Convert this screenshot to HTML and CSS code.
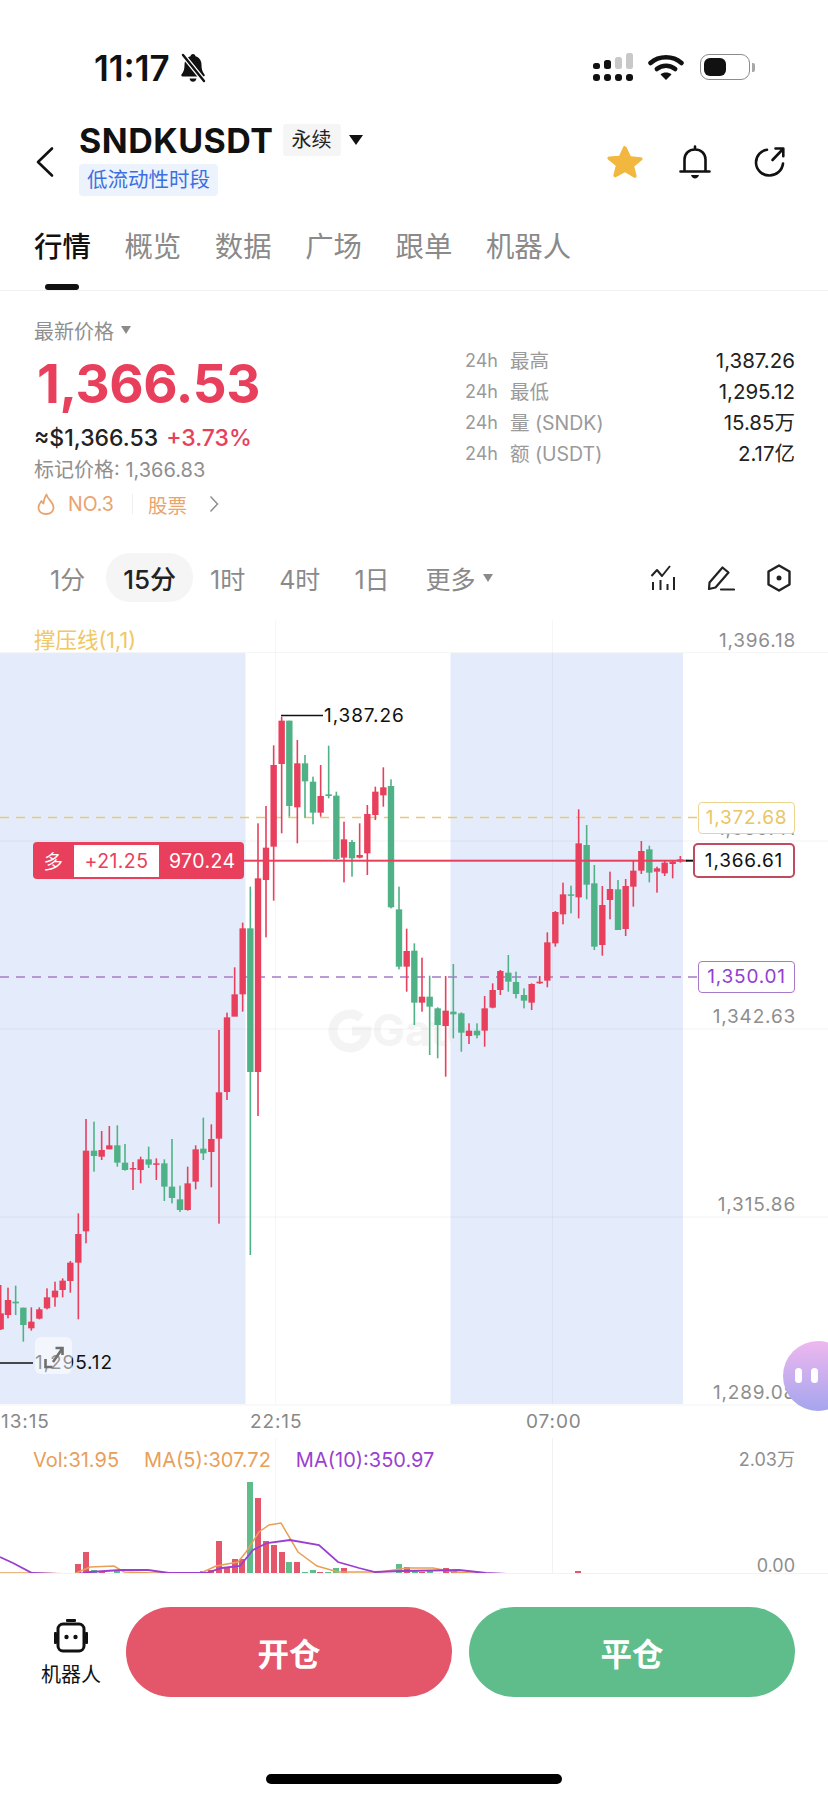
FILE: index.html
```html
<!DOCTYPE html>
<html lang="zh-CN">
	<head>
		<meta charset="UTF-8" />
		<meta name="viewport" content="width=device-width, initial-scale=1.0" />
		<title>SNDKUSDT</title>
		<link rel="stylesheet" href="styles.css">
	</head>
	<body>
		<div class="phone">
			<!-- status bar -->
			<div class="status">
				<span class="clock">11:17</span>
				<svg class="bell-off" viewBox="0 0 28 30" width="28" height="30">
					<path d="M14 1c1.500 0 2.400 1 2.500 2.300C20.500 4.500 22.500 8 22.500 12c0 4.500 1 7 3 9.500.6.900 0 2-1 2H3.500c-1 0-1.600-1.100-1-2 2-2.500 3-5 3-9.500 0-4 2-7.500 6-8.700C11.600 2 12.500 1 14 1z" fill="#111"/>
					<path d="M10.500 25.500h7c-.4 2-1.800 3.300-3.500 3.300s-3.100-1.300-3.500-3.300z" fill="#111"/>
					<path d="M4 2l21 26" stroke="#fff" stroke-width="5"/>
					<path d="M4 2l21 26" stroke="#111" stroke-width="2.400" stroke-linecap="round"/>
				</svg>
				<div class="status-right">
					<svg viewBox="0 0 40 28" width="40" height="28">
						<rect x="0" y="10" width="7" height="6" rx="2.500" fill="#111"/>
						<rect x="11" y="7" width="7" height="9" rx="2.500" fill="#111"/>
						<rect x="22" y="4" width="7" height="12" rx="2.500" fill="#c8c8c8"/>
						<rect x="33" y="0" width="7" height="16" rx="2.500" fill="#c8c8c8"/>
						<rect x="0" y="21" width="7" height="7" rx="3" fill="#111"/>
						<rect x="11" y="21" width="7" height="7" rx="3" fill="#111"/>
						<rect x="22" y="21" width="7" height="7" rx="3" fill="#111"/>
						<rect x="33" y="21" width="7" height="7" rx="3" fill="#111"/>
					</svg>
					<svg class="wifi" viewBox="0 0 36 26" width="36" height="26">
						<path d="M2.500 9C11 1.300 25 1.300 33.500 9" stroke="#111" stroke-width="4.500" fill="none" stroke-linecap="round"/>
						<path d="M8.800 15c5.200-4.500 13.200-4.500 18.400 0" stroke="#111" stroke-width="4.500" fill="none" stroke-linecap="round"/>
						<path d="M12.500 20.500c3-2.600 8-2.600 11 0L18 26z" fill="#111"/>
					</svg>
					<div class="battery"><div class="battery-fill"></div></div>
					<div class="battery-nub"></div>
				</div>
			</div>

			<!-- title -->
			<div class="header">
				<svg class="back" viewBox="0 0 20 32" width="20" height="32">
					<path d="M17 2.500L3 16l14 13.500" stroke="#111" stroke-width="2.600" fill="none" stroke-linecap="round" stroke-linejoin="round"/>
				</svg>
				<div class="title-col">
					<div class="title-row">
						<span class="symbol">SNDKUSDT</span>
						<span class="kind">永续</span>
						<span class="caret-dark"></span>
					</div>
					<span class="session">低流动性时段</span>
				</div>
				<div class="actions">
					<svg viewBox="0 0 36 34" width="36" height="34">
						<path d="M18 1.500c.8 0 1.400.5 1.800 1.300l4 9.300 10 .9c1.800.2 2.400 2.200 1 3.300l-7.500 6.500 2.300 9.800c.4 1.700-1.300 3-2.800 2.100L18 29.100 9.200 34c-1.500.9-3.200-.4-2.800-2.100l2.300-9.800-7.500-6.500c-1.400-1.100-.8-3.100 1-3.300l10-.9 4-9.300c.4-.8 1-1.300 1.800-1.300z" fill="#f2b73e" transform="scale(1 .94)"/>
					</svg>
					<svg class="act-bell" viewBox="0 0 32 34" width="32" height="34">
						<path d="M16 1.500v3M5.500 26V14.500C5.500 8.500 10 4.500 16 4.500s10.500 4 10.500 10V26M1.500 26.500h29" stroke="#111" stroke-width="2.600" fill="none" stroke-linecap="round"/>
						<path d="M12 30h8c-.6 2.300-2.200 3.500-4 3.500s-3.400-1.200-4-3.500z" fill="#111"/>
					</svg>
					<svg viewBox="0 0 32 32" width="32" height="32">
						<path d="M13 3.800C7 4.500 2 9.700 2 16.500 2 23.700 8 29.500 15.500 29.500c7 0 12.800-5.200 13.500-12" stroke="#111" stroke-width="2.600" fill="none" stroke-linecap="round"/>
						<path d="M18.500 14L29 3M21.500 2.500h7.800v7.800" stroke="#111" stroke-width="2.600" fill="none" stroke-linecap="round" stroke-linejoin="round"/>
					</svg>
				</div>
			</div>

			<!-- tabs -->
			<div class="tabs">
				<span class="tab tab-active">行情</span>
				<span class="tab">概览</span>
				<span class="tab">数据</span>
				<span class="tab">广场</span>
				<span class="tab">跟单</span>
				<span class="tab">机器人</span>
			</div>

			<!-- price block -->
			<div class="quote">
				<div class="quote-left">
					<div class="price-label">最新价格<span class="caret-gray"></span></div>
					<div class="price">1,366.53</div>
					<div class="price-sub">≈$1,366.53<span class="change">+3.73%</span></div>
					<div class="mark">标记价格: 1,366.83</div>
					<div class="hot">
						<svg viewBox="0 0 18 22" width="18" height="22">
							<path d="M9.500 1.500C10 6 16.500 9 16.500 14.500 16.500 18.500 13.300 21 9 21s-7.500-2.500-7.500-6.500c0-3 1.500-4.500 3-6.500.5 1.500 1 2 2 2.500C7 7 7.500 4 9.500 1.500z" stroke="#e9a36d" stroke-width="1.800" fill="none" stroke-linejoin="round"/>
						</svg>
						<span class="hot-no">NO.3</span>
						<span class="hot-sep"></span>
						<span>股票</span>
						<svg class="hot-arrow" viewBox="0 0 10 18" width="10" height="18">
							<path d="M1.500 1.500L8.500 9l-7 7.500" stroke="#8f8f8f" stroke-width="1.500" fill="none"/>
						</svg>
					</div>
				</div>
				<div class="stats">
					<div class="stat"><span class="stat-pre">24h</span><span class="stat-name">最高</span><span class="stat-val">1,387.26</span></div>
					<div class="stat"><span class="stat-pre">24h</span><span class="stat-name">最低</span><span class="stat-val">1,295.12</span></div>
					<div class="stat"><span class="stat-pre">24h</span><span class="stat-name">量 (SNDK)</span><span class="stat-val">15.85万</span></div>
					<div class="stat"><span class="stat-pre">24h</span><span class="stat-name">额 (USDT)</span><span class="stat-val">2.17亿</span></div>
				</div>
			</div>

			<!-- intervals -->
			<div class="intervals">
				<span class="iv iv-1m">1分</span>
				<span class="iv iv-on">15分</span>
				<span class="iv iv-1h">1时</span>
				<span class="iv iv-4h">4时</span>
				<span class="iv iv-1d">1日</span>
				<span class="iv iv-more">更多<span class="caret-gray"></span></span>
				<div class="tools">
					<svg viewBox="0 0 26 26" width="26" height="26">
						<path d="M1.500 11L7 5l5 6 8-10" stroke="#222" stroke-width="2" fill="none" stroke-linejoin="round"/>
						<path d="M3 17v8M10.500 15v10M17.500 19v6M24 12v13" stroke="#222" stroke-width="2" fill="none"/>
					</svg>
					<svg viewBox="0 0 28 26" width="28" height="26">
						<path d="M2 24L2.500 17.500 15.500 2.500 21.500 7.500 8.500 22.500z" stroke="#222" stroke-width="2.200" fill="none" stroke-linejoin="round"/>
						<path d="M14 24.500h13" stroke="#222" stroke-width="2.200" stroke-linecap="round"/>
					</svg>
					<svg viewBox="0 0 26 28" width="26" height="28">
						<path d="M13 1.500l10.500 6v13l-10.500 6-10.500-6v-13z" stroke="#222" stroke-width="2.400" fill="none" stroke-linejoin="round"/>
						<circle cx="13" cy="14" r="2.500" fill="#222"/>
					</svg>
				</div>
			</div>

			<!-- kline chart -->
			<div class="chart">
				<svg id="kline" class="chart-svg" viewBox="0 620 828 818" width="828" height="818"></svg>

				<span class="ind-label">撑压线(1,1)</span>
				<span class="axis axis-1">1,396.18</span>
				<span class="axis axis-2">1,369.41</span>
				<span class="axis axis-3">1,342.63</span>
				<span class="axis axis-4">1,315.86</span>
				<span class="axis axis-5">1,289.08</span>

				<div class="price-box box-yellow">1,372.68</div>
				<div class="price-box box-last">1,366.61</div>
				<div class="price-box box-purple">1,350.01</div>

				<div class="position">
					<span class="pos-side">多</span>
					<span class="pos-pnl">+21.25</span>
					<span class="pos-entry">970.24</span>
				</div>

				<span class="extreme extreme-high">1,387.26</span>
				<span class="extreme extreme-low">1,295.12</span>

				<div class="expand">
					<svg viewBox="0 0 20 28" width="20" height="28">
						<path d="M9 19L18 6M11.500 5h7v7" stroke="#6f6f6f" stroke-width="2.600" fill="none"/>
						<path d="M1.500 16v8h7" stroke="#6f6f6f" stroke-width="2.600" fill="none"/>
					</svg>
				</div>

				<div class="bubble"><span class="eye"></span><span class="eye"></span></div>

				<span class="time time-1">13:15</span>
				<span class="time time-2">22:15</span>
				<span class="time time-3">07:00</span>
			</div>

			<!-- volume pane -->
			<div class="volume">
				<svg id="vol" class="chart-svg" viewBox="0 1438 828 136" width="828" height="136"></svg>
				<div class="vol-legend">
					<span class="c-vol">Vol:31.95</span>
					<span class="c-vol">MA(5):307.72</span>
					<span class="c-ma10">MA(10):350.97</span>
				</div>
				<span class="vol-axis vol-max">2.03万</span>
				<span class="vol-axis vol-min">0.00</span>
			</div>

			<!-- bottom buttons -->
			<div class="bottom">
				<div class="bot-row">
					<div class="robot">
						<svg viewBox="0 0 34 34" width="34" height="34">
							<rect x="12" y="0" width="10" height="3" rx="1" fill="#111"/>
							<rect x="4" y="5" width="26" height="27" rx="5" stroke="#111" stroke-width="3" fill="none"/>
							<rect x="0" y="13" width="3" height="12" rx="1" fill="#111"/>
							<rect x="31" y="13" width="3" height="12" rx="1" fill="#111"/>
							<circle cx="12.500" cy="18" r="2.200" fill="#111"/>
							<circle cx="21.500" cy="18" r="2.200" fill="#111"/>
						</svg>
						<span>机器人</span>
					</div>
					<button class="trade trade-open">开仓</button>
					<button class="trade trade-close">平仓</button>
				</div>
				<div class="home-bar"></div>
			</div>
		</div>
		<script src="chart.js"></script>
	</body>
</html>
```

FILE: styles.css
```css
* {
	box-sizing: border-box;
}
body {
	margin: 0;
	background: #fff;
	font-family: Inter, "Noto Sans CJK SC", sans-serif;
	color: #222;
}
.phone {
	position: relative;
	width: 828px;
	height: 1801px;
	overflow: hidden;
}
svg {
	display: block;
}

/* status bar */
.status {
	display: flex;
	align-items: flex-start;
	height: 118px;
	padding: 50px 73px 0 94px;
}
.clock {
	font-size: 35px;
	line-height: 36px;
	font-weight: 600;
	color: #111;
}
.bell-off {
	margin: 3px 0 0 9px;
}
.status-right {
	display: flex;
	align-items: center;
	margin-left: auto;
	margin-top: 3px;
}
.wifi {
	margin-left: 15px;
}
.battery {
	width: 50px;
	height: 26px;
	margin-left: 16px;
	padding: 3px;
	border: 1.500px solid #8c8c8c;
	border-radius: 9px;
}
.battery-fill {
	width: 22px;
	height: 100%;
	background: #111;
	border-radius: 6px;
}
.battery-nub {
	width: 3px;
	height: 9px;
	margin-left: 2px;
	background: #a8a8a8;
	border-radius: 0 2px 2px 0;
}

/* header */
.header {
	display: flex;
	height: 82px;
	padding: 6px 42px 0 35px;
}
.back {
	margin: 22px 0 0 0;
}
.title-col {
	display: flex;
	flex-direction: column;
	align-items: flex-start;
	margin-left: 24px;
}
.title-row {
	display: flex;
	align-items: center;
	height: 32px;
}
.symbol {
	font-size: 34px;
	font-weight: 700;
	letter-spacing: 0.5px;
	color: #111;
}
.kind {
	margin-left: 9px;
	padding: 0 9px;
	height: 32px;
	line-height: 32px;
	font-size: 20px;
	background: #f5f5f5;
	border-radius: 3px;
	color: #222;
}
.caret-dark {
	margin-left: 8px;
	border-left: 7px solid transparent;
	border-right: 7px solid transparent;
	border-top: 10px solid #111;
}
.session {
	margin-top: 8px;
	height: 32px;
	padding: 0 8px;
	line-height: 32px;
	font-size: 20.500px;
	color: #3d6fe0;
	background: #ecf3fd;
	border-radius: 4px;
}
.actions {
	display: flex;
	align-items: center;
	margin-left: auto;
	height: 76px;
}
.act-bell {
	margin: 0 43px 0 36px;
}

/* tabs */
.tabs {
	display: flex;
	gap: 33.600px;
	height: 91px;
	padding: 30px 0 0 34px;
	border-bottom: 1px solid #f1f1f1;
}
.tab {
	position: relative;
	height: 34px;
	line-height: 34px;
	font-size: 28.400px;
	color: #8a8a8a;
}
.tab-active {
	color: #111;
	font-weight: 500;
}
.tab-active::after {
	content: "";
	position: absolute;
	left: 11px;
	top: 54px;
	width: 34px;
	height: 6px;
	background: #111;
	border-radius: 3px;
}

/* quote */
.quote {
	display: flex;
	justify-content: space-between;
	height: 249px;
	padding: 27px 33px 0 34px;
}
.price-label {
	display: flex;
	align-items: center;
	height: 24px;
	font-size: 20px;
	color: #8f8f8f;
}
.caret-gray {
	margin-left: 7px;
	border-left: 5.500px solid transparent;
	border-right: 5.500px solid transparent;
	border-top: 8px solid #8a8a8a;
}
.price {
	margin-top: 14px;
	margin-left: 3px;
	height: 56px;
	line-height: 56px;
	font-size: 53px;
	font-weight: 700;
	letter-spacing: -0.4px;
	color: #e8405c;
}
.price-sub {
	margin-top: 12px;
	height: 28px;
	line-height: 28px;
	font-size: 23px;
	font-weight: 500;
	color: #222;
}
.change {
	margin-left: 8px;
	color: #e8405c;
}
.mark {
	margin-top: 6px;
	height: 24px;
	line-height: 24px;
	font-size: 20px;
	color: #8f8f8f;
}
.hot {
	display: flex;
	align-items: center;
	margin: 10px 0 0 3px;
	height: 24px;
	font-size: 19.500px;
	color: #e9a36d;
}
.hot-no {
	margin-left: 13px;
}
.hot-sep {
	width: 1px;
	height: 20px;
	margin: 0 15px 0 18px;
	background: #eee;
}
.hot-arrow {
	margin-left: 22px;
}
.stats {
	display: flex;
	flex-direction: column;
	gap: 7px;
	width: 330px;
	padding-top: 31px;
}
.stat {
	display: flex;
	height: 24px;
	line-height: 24px;
	font-size: 18px;
	color: #9a9a9a;
}
.stat-pre {
	width: 45px;
}
.stat-name {
	font-size: 19.500px;
}
.stat-val {
	margin-left: auto;
	font-size: 20.500px;
	color: #222;
}

/* intervals */
.intervals {
	position: relative;
	display: flex;
	align-items: center;
	height: 80px;
	padding-bottom: 5px;
}
.iv {
	display: flex;
	align-items: center;
	font-size: 25px;
	color: #8a8a8a;
}
.iv-1m {
	margin-left: 50px;
}
.iv-on {
	margin-left: 21px;
	padding: 0 17px;
	height: 49px;
	font-size: 26px;
	color: #222;
	font-weight: 500;
	background: #f5f5f5;
	border-radius: 24px;
}
.iv-1h {
	margin-left: 17px;
}
.iv-4h {
	margin-left: 34px;
}
.iv-1d {
	margin-left: 34px;
}
.iv-more {
	margin-left: 36px;
}
.tools {
	display: flex;
	align-items: center;
	gap: 31px;
	margin-left: auto;
	margin-right: 36px;
}

/* chart: everything in here sits on the chart canvas */
.chart {
	position: relative;
	height: 818px;
}
.chart-svg {
	position: absolute;
	left: 0;
	top: 0;
}
.ind-label {
	position: absolute;
	left: 34px;
	top: 8px;
	font-size: 21.500px;
	line-height: 24px;
	color: #efc763;
}
.axis {
	position: absolute;
	right: 32px;
	font-size: 19px;
	letter-spacing: 0.8px;
	line-height: 24px;
	color: #8e8e8e;
}
.axis-1 { top: 9px; }
.axis-2 { top: 197px; }
.axis-3 { top: 385px; }
.axis-4 { top: 573px; }
.axis-5 { top: 761px; }
.price-box {
	position: absolute;
	left: 698px;
	width: 97px;
	height: 32px;
	line-height: 30px;
	text-align: center;
	font-size: 19px;
	letter-spacing: 0.8px;
	background: #fff;
	border-radius: 4px;
	border: 1px solid;
}
.box-yellow {
	top: 182px;
	color: #eac566;
	border-color: #ecd58e;
}
.box-last {
	left: 693px;
	width: 102px;
	top: 223px;
	height: 35px;
	line-height: 31px;
	color: #111;
	border: 2.500px solid #c04a5e;
	border-radius: 5px;
}
.box-purple {
	top: 341px;
	color: #9140d0;
	border-color: #a679c9;
}
.position {
	position: absolute;
	left: 33px;
	top: 222px;
	display: flex;
	align-items: center;
	width: 211px;
	height: 37px;
	font-size: 19.500px;
	letter-spacing: 0.4px;
	color: #fff;
	background: #e8405c;
	border-radius: 4px;
}
.pos-side {
	width: 41px;
	text-align: center;
}
.pos-pnl {
	width: 85px;
	height: 32px;
	line-height: 32px;
	text-align: center;
	color: #e8405c;
	background: #fff;
}
.pos-entry {
	margin-left: 10px;
}
.extreme {
	position: absolute;
	font-size: 19px;
	letter-spacing: 0.9px;
	line-height: 24px;
	color: #111;
}
.extreme-high {
	left: 324px;
	top: 84px;
}
.extreme-low {
	left: 35px;
	top: 731px;
}
.expand {
	position: absolute;
	left: 35px;
	top: 717px;
	display: flex;
	justify-content: center;
	width: 37px;
	height: 37px;
	padding-top: 6px;
	background: rgba(255, 255, 255, 0.55);
	border-radius: 6px;
}
.bubble {
	position: absolute;
	left: 783px;
	top: 721px;
	display: flex;
	gap: 9px;
	padding: 27px 0 0 12px;
	width: 70px;
	height: 70px;
	background: linear-gradient(#edb8ee, #a5a5ee);
	border-radius: 50%;
}
.eye {
	width: 7px;
	height: 15px;
	background: #fff;
	border-radius: 4px;
}
.time {
	position: absolute;
	top: 790px;
	font-size: 19px;
	letter-spacing: 0.9px;
	line-height: 24px;
	color: #888;
}
.time-1 { left: 1px; }
.time-2 { left: 250px; }
.time-3 { left: 526px; }

/* volume */
.volume {
	position: relative;
	height: 136px;
}
.vol-legend {
	position: absolute;
	left: 33px;
	top: 10px;
	display: flex;
	gap: 25px;
	font-size: 20px;
	line-height: 24px;
}
.c-vol {
	color: #e8a059;
}
.c-ma10 {
	color: #9a3fd0;
}
.vol-axis {
	position: absolute;
	right: 33px;
	font-size: 18px;
	line-height: 24px;
	color: #8e8e8e;
}
.vol-max {
	top: 10px;
}
.vol-min {
	top: 116px;
}

/* bottom */
.bottom {
	height: 227px;
	background: #fff;
	padding-top: 33px;
}
.bot-row {
	display: flex;
	gap: 17px;
	height: 90px;
	padding: 0 33px 0 41px;
}
.robot {
	display: flex;
	flex-direction: column;
	align-items: center;
	width: 60px;
	margin-right: 8px;
	padding-top: 12px;
	font-size: 20px;
	color: #111;
}
.robot span {
	margin-top: 9px;
	line-height: 26px;
}
.trade {
	flex: 1;
	border: none;
	border-radius: 45px;
	font-family: inherit;
	font-size: 31.500px;
	font-weight: 700;
	color: #fff;
}
.trade-open {
	background: #e4566a;
}
.trade-close {
	background: #5fbd8c;
}
.home-bar {
	width: 296px;
	height: 10px;
	margin: 77px auto 0;
	background: #000;
	border-radius: 5px;
}
```

FILE: chart.js
```js
const RED = '#e8405c'
const GREEN = '#4fb286'
const NS = 'http://www.w3.org/2000/svg'

// candles were read off in 3x coordinates: [x, wickTop, wickBottom, bodyTop, bodyBottom, colour]
const groups = [
	{ ox: 0, oy: 1060, rows: [
		[2, 675, 810, 760, 808, 'r'], [24, 683, 775, 720, 765, 'r'], [47, 677, 765, 725, 730, 'g'],
		[70, 743, 845, 743, 795, 'g'], [94, 742, 812, 785, 805, 'r'], [118, 742, 778, 748, 776, 'r'],
		[141, 685, 748, 712, 745, 'r'], [165, 665, 740, 692, 712, 'r'], [188, 655, 712, 662, 690, 'r'],
		[211, 603, 698, 608, 663, 'r'], [235, 460, 778, 522, 608, 'r'], [258, 177, 550, 272, 514, 'r'],
		[282, 185, 335, 272, 288, 'g'], [305, 213, 300, 270, 290, 'r'], [328, 198, 268, 256, 268, 'r'],
		[352, 196, 320, 256, 308, 'g'], [375, 252, 332, 308, 330, 'g'], [399, 306, 390, 324, 328, 'r'],
		[422, 290, 370, 298, 330, 'r'], [446, 260, 324, 298, 314, 'g'], [469, 295, 360, 310, 314, 'r'],
		[493, 298, 423, 310, 380, 'g'], [516, 237, 430, 380, 414, 'g'], [540, 377, 456, 418, 450, 'g'],
		[563, 320, 452, 370, 450, 'r'], [587, 256, 388, 268, 365, 'r'], [610, 173, 300, 266, 280, 'g'],
		[634, 193, 382, 237, 276, 'r'], [657, -90, 491, 97, 236, 'r']
	] },
	{ ox: 0, oy: 680, rows: [
		[681, 998, 1260, 1012, 1236, 'r'], [704, 862, 995, 943, 1010, 'r'], [728, 728, 995, 745, 943, 'r'],
		[751, 620, 1725, 745, 1176, 'g'], [774, 430, 1308, 595, 1176, 'r'], [798, 378, 772, 503, 600, 'r'],
		[821, 196, 662, 255, 500, 'r'], [845, 110, 460, 122, 252, 'r'], [868, 122, 410, 122, 378, 'g'],
		[892, 180, 490, 250, 382, 'r'], [915, 225, 413, 250, 304, 'g'], [939, 290, 433, 305, 398, 'g'],
		[962, 255, 410, 348, 398, 'r'], [986, 197, 355, 343, 348, 'g'], [1009, 335, 540, 347, 537, 'g'],
		[1032, 425, 607, 478, 533, 'r'], [1056, 480, 590, 486, 535, 'g'], [1079, 430, 535, 525, 533, 'r'],
		[1102, 375, 585, 402, 520, 'r'], [1126, 320, 420, 335, 405, 'r'], [1150, 262, 380, 322, 346, 'r'],
		[1173, 298, 685, 318, 682, 'g'], [1197, 620, 868, 688, 860, 'g'], [1220, 746, 935, 813, 860, 'r']
	] },
	{ ox: 414, oy: 680, rows: [
		[1, 790, 1035, 812, 968, 'g'], [24, 833, 995, 950, 968, 'r'], [47, 887, 1125, 950, 980, 'g'],
		[71, 982, 1135, 985, 1035, 'g'], [95, 888, 1190, 992, 1038, 'r'], [118, 852, 1075, 995, 1003, 'g'],
		[142, 997, 1115, 1000, 1058, 'g'], [165, 1030, 1092, 1052, 1068, 'r'], [189, 1030, 1075, 1052, 1066, 'g'],
		[212, 948, 1100, 985, 1052, 'r'], [236, 910, 985, 930, 983, 'r'], [259, 870, 945, 873, 930, 'r'],
		[283, 825, 935, 878, 905, 'g'], [306, 875, 955, 906, 942, 'g'], [330, 925, 985, 945, 962, 'g'],
		[353, 910, 990, 912, 968, 'r'], [377, 888, 912, 905, 910, 'r'], [400, 757, 922, 787, 902, 'r'],
		[424, 693, 800, 696, 790, 'r'], [447, 608, 733, 643, 703, 'r'], [471, 617, 700, 643, 647, 'g'],
		[494, 388, 715, 490, 652, 'r'], [518, 435, 658, 495, 614, 'g'], [541, 555, 810, 610, 800, 'g'],
		[565, 618, 827, 675, 795, 'r'], [588, 575, 718, 627, 660, 'r'], [612, 600, 750, 628, 750, 'g'],
		[635, 597, 768, 618, 747, 'r'], [658, 540, 680, 572, 620, 'r'], [682, 483, 582, 513, 572, 'r'],
		[706, 497, 607, 508, 578, 'g'], [729, 560, 638, 565, 575, 'r'], [752, 540, 588, 548, 580, 'r'],
		[776, 543, 595, 545, 552, 'r'], [799, 528, 548, 538, 544, 'r']
	] }
]

// [x, top, colour]
const volumes = [
	[78, 1564, 'r'], [86, 1552, 'r'], [94, 1570, 'g'], [102, 1572, 'r'], [117, 1571, 'g'], [195, 1572, 'r'],
	[203, 1571, 'g'], [211, 1570, 'r'], [219, 1541, 'r'], [227, 1568, 'r'], [235, 1559, 'r'], [242, 1559, 'r'],
	[250, 1482, 'g'], [258, 1498, 'r'], [266, 1541, 'r'], [274, 1545, 'r'], [282, 1552, 'r'], [289, 1562, 'g'],
	[297, 1562, 'r'], [305, 1572, 'g'], [313, 1570, 'g'], [320, 1572, 'r'], [328, 1572, 'g'], [336, 1568, 'g'],
	[344, 1568, 'r'], [399, 1564, 'g'], [407, 1567, 'r'], [415, 1570, 'g'], [422, 1572, 'r'], [430, 1570, 'g'],
	[446, 1568, 'r'], [454, 1570, 'r'], [578, 1571, 'r']
]

const ma5 = '0,1573 32,1573 74,1574 90,1567 114,1566 124,1572 153,1573 201,1573 216,1566 238,1562 246,1552 259,1532 269,1525 281,1523 298,1552 317,1566 338,1572 380,1572 407,1568 433,1568 454,1572 486,1574'
const ma10 = '0,1557 13,1563 32,1573 58,1574 79,1574 90,1572 121,1570 148,1570 169,1573 206,1573 222,1568 240,1566 253,1550 267,1543 290,1540 319,1545 338,1562 359,1568 375,1572 401,1571 459,1570 486,1573 507,1574'

function add(svg, name, attrs) {
	const el = document.createElementNS(NS, name)
	Object.keys(attrs).forEach(key => el.setAttribute(key, attrs[key]))
	svg.appendChild(el)
	return el
}

function drawCandle(svg, x, wt, wb, bt, bb, color) {
	add(svg, 'rect', { x: x - 0.8, y: wt, width: 1.6, height: wb - wt, fill: color })
	add(svg, 'rect', { x: x - 3.2, y: bt, width: 6.4, height: Math.max(bb - bt, 1.5), fill: color })
}

const kline = document.getElementById('kline')

// watermark sits under the session bands
add(kline, 'path', { d: 'M361 1018a17 17 0 1 0 6 13h-15', stroke: '#f4f4f4', 'stroke-width': 9, fill: 'none' })
add(kline, 'text', { x: 372, y: 1046, fill: '#f4f4f4', 'font-size': 44, 'font-weight': 700, 'font-family': 'Inter, sans-serif' }).textContent = 'Gate'

add(kline, 'rect', { x: 0, y: 653, width: 245.5, height: 751, fill: '#e4ecfb' })
add(kline, 'rect', { x: 450.5, y: 653, width: 232.5, height: 751, fill: '#e4ecfb' })

// grid
;[840.5, 1028.5, 1216.5, 1404.5].forEach(y => {
	add(kline, 'rect', { x: 0, y: y, width: 828, height: 1, fill: 'rgba(0, 0, 0, 0.05)' })
})
add(kline, 'rect', { x: 0, y: 652, width: 828, height: 1, fill: '#f6f6f6' })
add(kline, 'rect', { x: 0, y: 1438, width: 828, height: 1, fill: '#f4f4f4' })
;[275, 552].forEach(x => {
	add(kline, 'rect', { x: x, y: 620, width: 1, height: 784, fill: 'rgba(0, 0, 0, 0.035)' })
})

// order lines
add(kline, 'path', { d: 'M0 817.500H698', stroke: '#ecc96f', 'stroke-width': 1.3, 'stroke-dasharray': '9 7', fill: 'none' })
add(kline, 'path', { d: 'M0 977H698', stroke: '#a679c9', 'stroke-width': 1.3, 'stroke-dasharray': '9 7', fill: 'none' })

groups.forEach(group => {
	group.rows.forEach(row => {
		drawCandle(
			kline,
			group.ox + row[0] / 3,
			group.oy + row[1] / 3,
			group.oy + row[2] / 3,
			group.oy + row[3] / 3,
			group.oy + row[4] / 3,
			row[5] === 'r' ? RED : GREEN
		)
	})
})

add(kline, 'rect', { x: 244, y: 859.7, width: 443, height: 2, fill: RED })
add(kline, 'rect', { x: 686, y: 859.7, width: 8, height: 2, fill: '#111' })

// high / low markers
add(kline, 'path', { d: 'M281 715.500H323M0 1363H33', stroke: '#111', 'stroke-width': 1.4, fill: 'none' })

const vol = document.getElementById('vol')
add(vol, 'rect', { x: 275, y: 1438, width: 1, height: 136, fill: '#f6f6f6' })
add(vol, 'rect', { x: 552, y: 1438, width: 1, height: 136, fill: '#f2f2f2' })
volumes.forEach(row => {
	add(vol, 'rect', { x: row[0] - 3, y: row[1], width: 6, height: 1574 - row[1], fill: row[2] === 'r' ? '#e4566a' : '#5fbd8c' })
})
add(vol, 'polyline', { points: ma5, stroke: '#e8a059', 'stroke-width': 1.5, fill: 'none' })
add(vol, 'polyline', { points: ma10, stroke: '#9a3fd0', 'stroke-width': 1.8, fill: 'none' })
add(vol, 'rect', { x: 0, y: 1573, width: 828, height: 1, fill: '#f2f2f2' })
```
